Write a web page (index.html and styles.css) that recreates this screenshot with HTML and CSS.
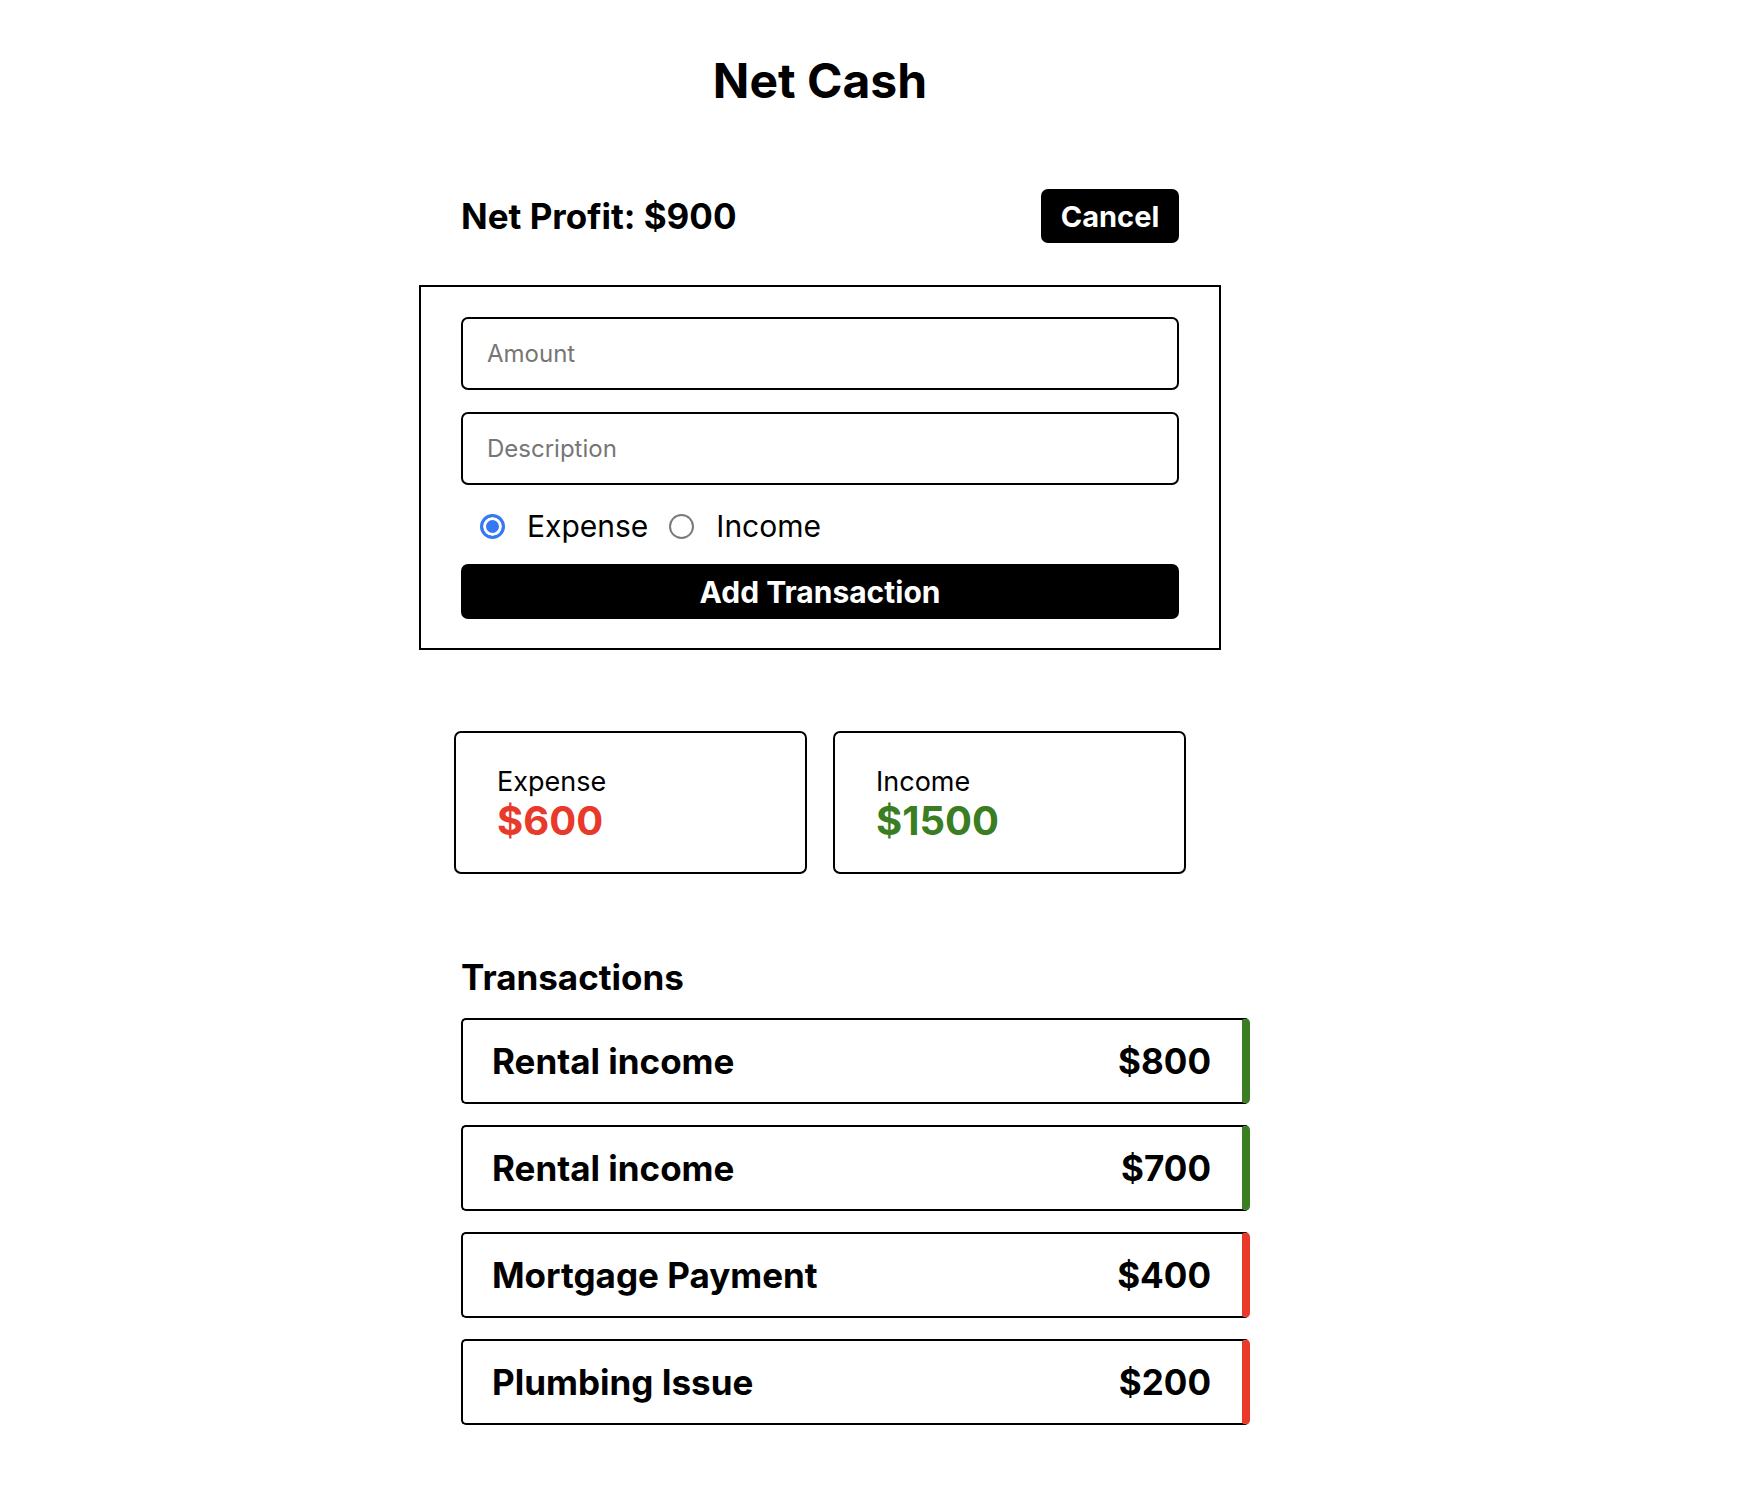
FILE: index.html
```html
<!DOCTYPE html>
<html lang="en">
<head>
<meta charset="utf-8">
<title>Net Cash</title>
<link rel="stylesheet" href="styles.css">
</head>
<body>
<div class="page">
  <div class="app">
    <h1 class="title">Net Cash</h1>
    <div class="header">
      <h2 class="profit">Net Profit: $900</h2>
      <button class="btn btn-cancel" type="button">Cancel</button>
    </div>
    <form class="form">
      <input class="field" type="text" placeholder="Amount">
      <input class="field field-desc" type="text" placeholder="Description">
      <div class="radios">
        <label class="radio"><input type="radio" name="type" checked><span>Expense</span></label>
        <label class="radio"><input type="radio" name="type"><span>Income</span></label>
      </div>
      <button class="btn btn-add" type="button">Add Transaction</button>
    </form>
    <div class="cards">
      <div class="card">
        <div class="card-label">Expense</div>
        <div class="card-value expense">$600</div>
      </div>
      <div class="card">
        <div class="card-label">Income</div>
        <div class="card-value income">$1500</div>
      </div>
    </div>
    <h3 class="tx-title">Transactions</h3>
    <ul class="tx-list">
      <li class="tx tx-income"><span>Rental income</span><span>$800</span></li>
      <li class="tx tx-income"><span>Rental income</span><span>$700</span></li>
      <li class="tx tx-expense"><span>Mortgage Payment</span><span>$400</span></li>
      <li class="tx tx-expense"><span>Plumbing Issue</span><span>$200</span></li>
    </ul>
  </div>
</div>
</body>
</html>
```

FILE: styles.css
```css
* { box-sizing: border-box; }
html, body { margin: 0; padding: 0; background: #fff; }
body {
  font-family: Inter, "Noto Sans", "Liberation Sans", sans-serif;
  color: #000;
}
.page {
  padding-right: 102px;
}
.app {
  width: 802px;
  margin: 0 auto;
  padding-bottom: 60px;
}
.title {
  margin: 52px 0 0;
  text-align: center;
  font-size: 48px;
  font-weight: 700;
  line-height: 58px;
}
.header {
  margin-top: 79px;
  padding: 0 42px;
  height: 54px;
  display: flex;
  align-items: center;
  justify-content: space-between;
}
.profit {
  margin: 0;
  font-size: 35px;
  font-weight: 700;
  line-height: 44px;
}
.btn {
  font-family: inherit;
  font-weight: 700;
  color: #fff;
  background: #000;
  border: none;
  border-radius: 7px;
  cursor: pointer;
}
.btn-cancel {
  width: 138px;
  height: 54px;
  font-size: 29px;
  padding: 0;
}
.form {
  margin-top: 42px;
  border: 2px solid #000;
  padding: 30px 40px 29px;
  display: flex;
  flex-direction: column;
}
.field {
  height: 73px;
  border: 2px solid #000;
  border-radius: 7px;
  padding: 0 24px;
  font-family: inherit;
  font-size: 24px;
  color: #000;
  outline: none;
}
.field::placeholder { color: #767676; }
.field-desc { margin-top: 22px; }
.radios {
  margin-top: 24px;
  height: 34px;
  display: flex;
  align-items: center;
  padding-left: 19px;
  gap: 21px;
}
.radio {
  display: flex;
  align-items: center;
  gap: 22px;
  font-size: 30px;
}
.radio input {
  appearance: none;
  -webkit-appearance: none;
  margin: 0;
  width: 25px;
  height: 25px;
  border-radius: 50%;
  border: 2px solid #7a7a7a;
  background: #fff;
}
.radio input:checked {
  border: 3px solid #3478f6;
  box-shadow: inset 0 0 0 3px #fff;
  background: #3478f6;
}
.btn-add {
  margin-top: 21px;
  height: 55px;
  font-size: 30px;
}
.cards {
  margin-top: 81px;
  padding: 0 35px;
  display: flex;
  gap: 26px;
}
.card {
  flex: 1;
  height: 143px;
  border: 2px solid #000;
  border-radius: 7px;
  padding: 32px 41px 0;
}
.card-label {
  font-size: 27px;
  line-height: 33px;
}
.card-value {
  font-size: 40px;
  font-weight: 700;
  line-height: 46px;
}
.expense { color: #e8392a; }
.income { color: #3a7d23; }
.tx-title {
  margin: 82px 0 0 42px;
  font-size: 35px;
  font-weight: 700;
  line-height: 42px;
}
.tx-list {
  list-style: none;
  margin: 20px 0 0 42px;
  padding: 0;
  width: 789px;
}
.tx {
  height: 86px;
  margin-bottom: 21px;
  border: 2px solid #000;
  border-right-width: 8px;
  border-radius: 5px;
  padding: 0 31px 0 29px;
  display: flex;
  align-items: center;
  justify-content: space-between;
  font-size: 35px;
  font-weight: 700;
}
.tx-income { border-right-color: #3a7d23; }
.tx-expense { border-right-color: #e8392a; }
```
